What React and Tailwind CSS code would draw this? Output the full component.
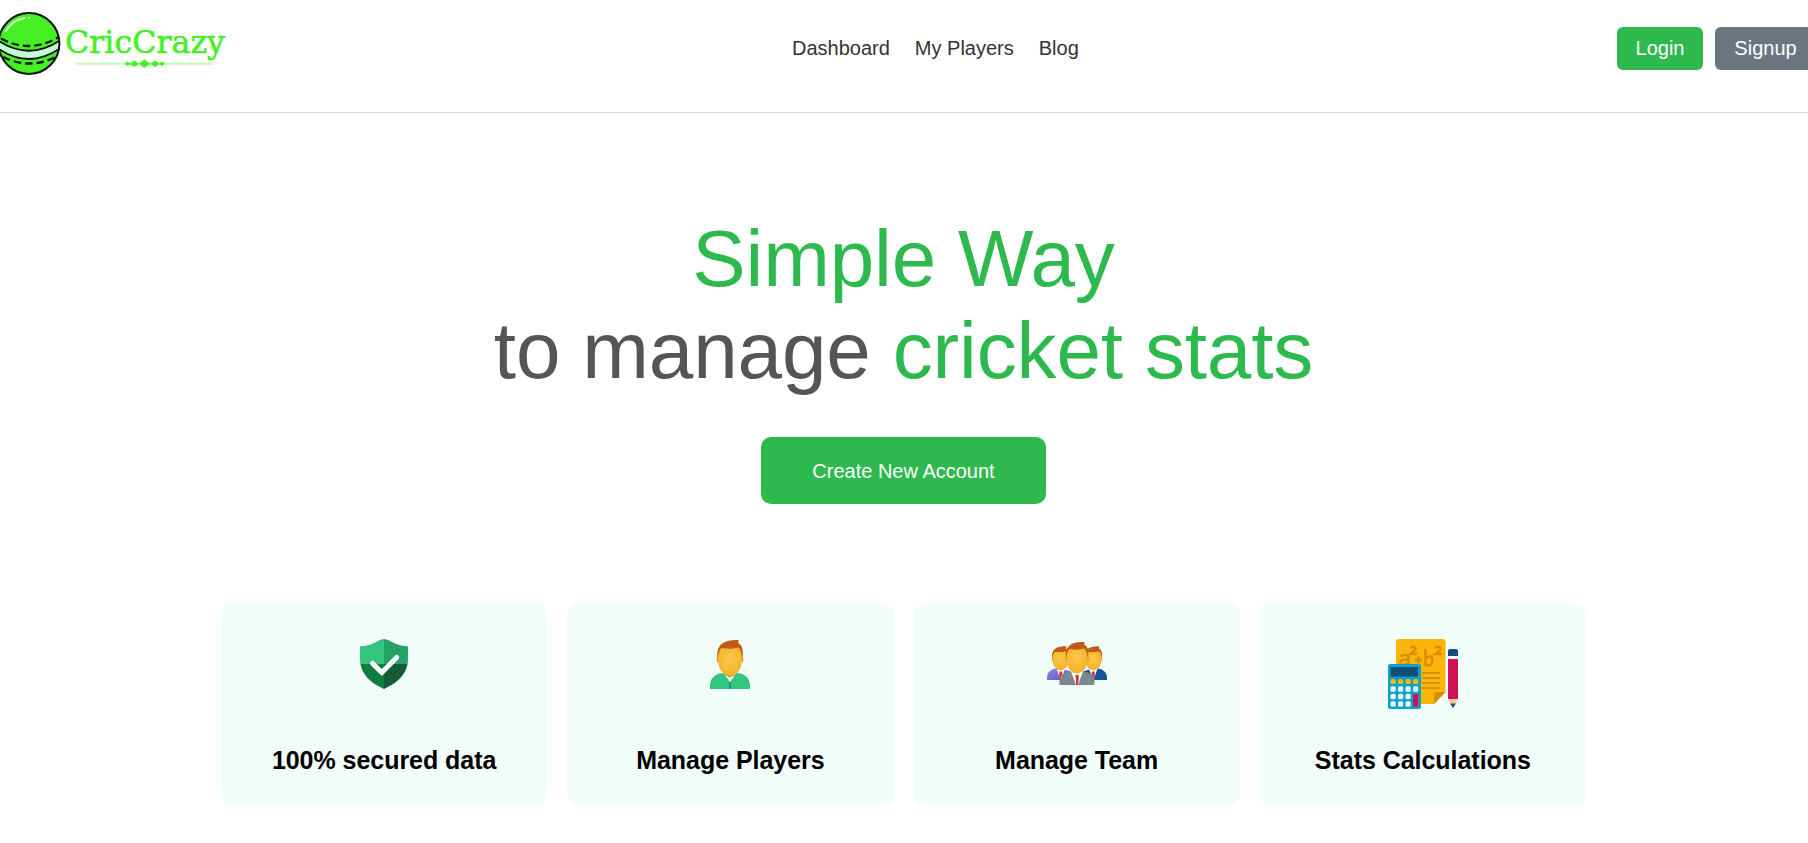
function Logo() {
  return (
    <svg width="232" height="80" viewBox="0 0 232 80" className="block">
      <defs>
        <clipPath id="ball">
          <circle cx="29" cy="43.5" r="30.5" />
        </clipPath>
      </defs>
      <g clipPath="url(#ball)">
        <circle cx="29" cy="43.5" r="30.5" fill="#44f024" />
        <path d="M-2 41Q29 59 60 41V50Q29 68 -2 49Z" fill="#c4fbd2" />
        <path d="M-2 40.500Q29 61 60 40.500M-2 48.500Q29 69.500 60 48.500" fill="none" stroke="#111" strokeWidth="1.800" />
        <path d="M1 38.500Q29 54 58 37.500M3 57Q29 70 56 57" fill="none" stroke="#111" strokeWidth="2.300" strokeDasharray="7.500 4" />
        <path d="M6 31Q12 20.500 24.500 18" fill="none" stroke="#d6ffd0" strokeWidth="2" strokeLinecap="round" />
        <circle cx="29" cy="17.700" r="1" fill="#d6ffd0" />
      </g>
      <circle cx="29" cy="43.500" r="30.400" fill="none" stroke="#111" strokeWidth="2" />
      <text x="65" y="52.500" textLength="160" lengthAdjust="spacingAndGlyphs" fontFamily="'DejaVu Serif', serif" fontSize="32.500" fill="#44f024" stroke="#44f024" strokeWidth="0.600">
        CricCrazy
      </text>
      <path d="M76 63.800H213" stroke="#c2fbb8" strokeWidth="2" />
      <path d="M139 63.800L144.500 60L150 63.800L144.500 67.600ZM130 63.800L134.300 61L138.600 63.800L134.300 66.600ZM150.500 63.800L155 61L159.500 63.800L155 66.600ZM125 63.800L127.500 61.800L130 63.800L127.500 65.800ZM159.500 63.800L162 61.800L164.500 63.800L162 65.800Z" fill="#44f024" stroke="#44f024" strokeWidth="0.700" />
    </svg>
  );
}

function Shield() {
  return (
    <svg width="48" height="50" viewBox="0 0 48 50">
      <defs>
        <clipPath id="shield">
          <path d="M24 0C17 .500 14 7 0 7.300V20C0 35 11 44 24 50C37 44 48 35 48 20V7.300C34 7 31 .500 24 0Z" />
        </clipPath>
      </defs>
      <g clipPath="url(#shield)">
        <path d="M0 0H24V25H0Z" fill="#36c481" />
        <path d="M24 0H48V25H24Z" fill="#23a366" />
        <path d="M0 25H24V50H0Z" fill="#107c42" />
        <path d="M24 25H48V50H24Z" fill="#185c37" />
      </g>
      <path d="M12.500 24.500L21.800 33.500L36.700 18.500" fill="none" stroke="#fff" strokeWidth="5" strokeLinecap="round" />
    </svg>
  );
}

function Face() {
  return (
    <>
      <path d="M7.500 19C6.500 9 9 4.500 16 1.500C20 0 24 0 28.500 0V3.500C32.500 5 33.500 10 32.500 19Z" fill="#bf5b14" />
      <ellipse cx="8.300" cy="19.500" rx="1.700" ry="3" fill="#e39a23" />
      <ellipse cx="31.700" cy="19.500" rx="1.700" ry="3" fill="#e39a23" />
      <path d="M8 18C8.500 13 9 10 11.500 8C18 9.300 23 9 28 7.500C31 9.500 31.500 13 32 18C32.500 29 26.500 35.800 20 35.800C13.500 35.800 7.500 29 8 18Z" fill="url(#skin)" />
    </>
  );
}

function Player() {
  return (
    <svg width="40" height="49" viewBox="0 0 40 49">
      <defs>
        <radialGradient id="skin" cx=".5" cy=".4" r=".6">
          <stop offset="0" stopColor="#fdc84a" />
          <stop offset="1" stopColor="#f3b228" />
        </radialGradient>
      </defs>
      <path d="M13 33H27L20 43Z" fill="#fff" />
      <path d="M14.500 30H25.500V35L20 37.500L14.500 35Z" fill="#d39220" />
      <path d="M0 49V46C0 38 5 33.500 13.500 33L20 42L26.500 33C35 33.500 40 38 40 46V49Z" fill="#36c481" />
      <path d="M20 42V49" stroke="#159357" strokeWidth="1.600" />
      <Face />
    </svg>
  );
}

function Team() {
  return (
    <svg width="60" height="44" viewBox="0 0 60 44">
      <defs>
        <linearGradient id="violet" x2="1" y2="1">
          <stop stopColor="#8684e8" />
          <stop offset="1" stopColor="#5a57c8" />
        </linearGradient>
      </defs>
      <path d="M0 38V36C0 30 4 27 10 26.500L16 27L25 30V38Z" fill="url(#violet)" />
      <path d="M35 30L43 27L50 26.500C56 27 60 30 60 36V38H35Z" fill="#155596" />
      <path d="M9.500 26.500L13.500 38L18.500 26ZM41.500 26L46.500 38L50.500 26.500Z" fill="#fff" />
      <path d="M12.300 29.500H15.300V38H12.300ZM44.700 29.500H47.700V38H44.700Z" fill="#d53237" />
      <g transform="translate(.200 4.300) scale(.67)"><Face /></g>
      <g transform="translate(33 4.300) scale(.67)"><Face /></g>
      <path d="M12.500 43V39C12.500 34 16 30.500 22 30H38C44 30.500 47.500 34 47.500 39V41Q47.500 43 45.500 43H14.500Q12.500 43 12.500 43Z" fill="#7c878e" />
      <path d="M24 29.500L29 43H31L36 29.500Z" fill="#fff" />
      <path d="M28.300 33H31.700V37L31 43H29V37Z" fill="#d53237" />
      <g transform="translate(12.400 0) scale(.88)"><Face /></g>
    </svg>
  );
}

function Calculations() {
  return (
    <svg width="70" height="70" viewBox="0 0 70 70">
      <path d="M11 0H54.500Q57.500 0 57.500 3V53L46 65H8V3Q8 0 11 0Z" fill="#fbb50a" />
      <path d="M57.500 53L46 65V55Q46 53 48 53Z" fill="#d88f06" />
      <g fill="none" stroke="#d88f06" strokeWidth="2.500">
        <path d="M12.500 17.500Q15 15.500 18.500 16Q20.500 16.500 20.500 19.500V27M20.500 20.500Q12 20 12 24Q13 28 20.500 24" />
        <path d="M22 9Q25.500 6.500 27.500 9Q28 11 22.500 15H29M47 9Q50.500 6.500 52.500 9Q53 11 47.500 15H54" />
        <path d="M27 21H34M30.500 17.500V24.500M37.500 10V27M37.500 19Q44.500 15 44.500 21.500Q44 28 37.500 26" />
        <path d="M34 34H52M34 39H52M34 44H52M34 49H52" strokeWidth="2" />
      </g>
      <rect x="0" y="25" width="33" height="45" rx="2.500" fill="#09a2cb" />
      <path d="M2.500 28H30V37.500H2.500Z" fill="#104d79" />
      <g fill="#fbb50a">
        <rect x="2.500" y="40" width="5.200" height="5" rx="1.500" />
        <rect x="10" y="40" width="5.200" height="5" rx="1.500" />
        <rect x="17.500" y="40" width="5.200" height="5" rx="1.500" />
        <rect x="25" y="40" width="5.200" height="5" rx="1.500" />
      </g>
      <g fill="#edf6fa">
        <rect x="2.500" y="47.200" width="5.200" height="5.500" rx="1.500" />
        <rect x="10" y="47.200" width="5.200" height="5.500" rx="1.500" />
        <rect x="17.500" y="47.200" width="5.200" height="5.500" rx="1.500" />
        <rect x="25" y="47.200" width="5.200" height="5.500" rx="1.500" />
        <rect x="2.500" y="54.800" width="5.200" height="5.500" rx="1.500" />
        <rect x="10" y="54.800" width="5.200" height="5.500" rx="1.500" />
        <rect x="17.500" y="54.800" width="5.200" height="5.500" rx="1.500" />
        <rect x="2.500" y="62.200" width="5.200" height="5.500" rx="1.500" />
        <rect x="10" y="62.200" width="5.200" height="5.500" rx="1.500" />
        <rect x="17.500" y="62.200" width="5.200" height="5.500" rx="1.500" />
      </g>
      <rect x="25" y="55" width="5.200" height="12.700" rx="1" fill="#cf1257" />
      <path d="M60 17V12Q60 10 62 10H68Q70 10 70 12V17Z" fill="#104d79" />
      <path d="M60 17H70V20H60Z" fill="#fff" />
      <path d="M60 20H70V60H60Z" fill="#cf1257" />
      <path d="M60 60H70L65 69Z" fill="#f6c79b" />
      <path d="M62.200 64.500H67.800L65 69Z" fill="#104d79" />
    </svg>
  );
}

const features = [
  { title: "100% secured data", Icon: Shield, pad: "pt-[35px]" },
  { title: "Manage Players", Icon: Player, pad: "pt-[36px]" },
  { title: "Manage Team", Icon: Team, pad: "pt-[38px]" },
  { title: "Stats Calculations", Icon: Calculations, pad: "pt-[35px]" },
];

export default function App() {
  return (
    <div className="h-[843px] w-full overflow-hidden bg-white font-['Liberation_Sans',Arial,sans-serif]">
      <header className="grid h-[113px] grid-cols-[792px_825px_auto] items-start overflow-hidden border-b border-[#dcdcdc] text-xl leading-[23px]">
        <Logo />
        <nav className="flex gap-[25px] pt-[37px] whitespace-nowrap text-[#333]">
          <a>Dashboard</a>
          <a>My Players</a>
          <a>Blog</a>
        </nav>
        <div className="flex gap-3 pt-[27px] text-white">
          <button className="h-[43px] w-[86px] shrink-0 rounded-md bg-[#2db94d]">Login</button>
          <button className="h-[43px] w-[101px] shrink-0 rounded-md bg-[#6c757d]">Signup</button>
        </div>
      </header>
      <main className="flex flex-col items-center pr-px">
        <h1 className="pt-[100px] text-center text-[80px] leading-[92px] tracking-[-0.14px] text-[#555]">
          <span className="text-[#2db94d]">Simple Way</span>
          <br />
          to manage <span className="text-[#2db94d]">cricket stats</span>
        </h1>
        <button className="mt-10 h-[67px] w-[285px] rounded-[10px] bg-[#2db94d] pt-px text-xl leading-[23px] text-white">
          Create New Account
        </button>
        <section className="mt-[100px] grid w-[1365px] grid-cols-4 gap-5">
          {features.map(({ title, Icon, pad }) => (
            <div key={title} className="flex h-[201px] flex-col items-center rounded-[10px] bg-[#f0fdf9]">
              <div className={`flex h-[142px] items-start ${pad}`}>
                <Icon />
              </div>
              <h2 className="text-[25px] leading-[29px] font-bold tracking-[-0.04px] text-black">{title}</h2>
            </div>
          ))}
        </section>
      </main>
    </div>
  );
}
